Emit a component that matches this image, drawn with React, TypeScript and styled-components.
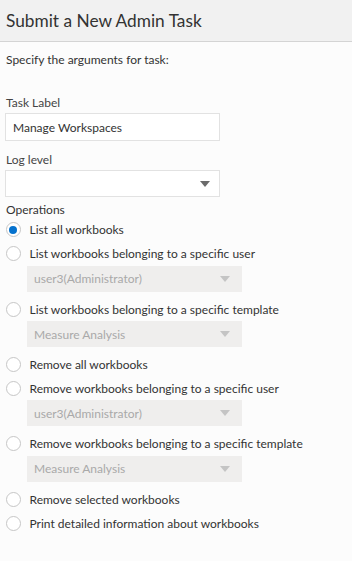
import React from "react";
import styled, { createGlobalStyle } from "styled-components";

const Global = createGlobalStyle`
  html, body { margin: 0; padding: 0; background: #fcfcfc; }
  body { font-family: Lato, "Open Sans", sans-serif; color: #333; font-size: 12px; }
`;

const Header = styled.header`
  height: 41px;
  background: #f1f1f1;
  border-bottom: 1px solid #d4d4d4;
  display: flex;
  align-items: center;
  padding-left: 6px;
  font-size: 17.3px;
  color: #333;
`;

const Body = styled.main`
  display: flex;
  flex-direction: column;
  padding: 10px 6px 0 6px;
`;

const Intro = styled.div`
  line-height: 16px;
  margin-bottom: 27px;
`;

const Label = styled.label<{ $top?: number }>`
  display: block;
  line-height: 16px;
  margin-top: ${(p) => p.$top ?? 0}px;
  margin-bottom: 2px;
  color: #444;
`;

const TextInput = styled.div`
  box-sizing: border-box;
  width: 215px;
  height: 28px;
  margin-left: -1px;
  border: 1px solid #e2e2e2;
  background: #fff;
  display: flex;
  align-items: center;
  padding-left: 7px;
  color: #333;
`;

const Select = styled.div<{ $disabled?: boolean; $indent?: number }>`
  box-sizing: border-box;
  width: 215px;
  height: ${(p) => (p.$disabled ? 26 : 27)}px;
  flex-shrink: 0;
  margin-left: ${(p) => p.$indent ?? -1}px;
  border: 1px solid ${(p) => (p.$disabled ? "#efeeed" : "#e2e2e2")};
  background: ${(p) => (p.$disabled ? "#efeeed" : "#fff")};
  display: flex;
  align-items: center;
  justify-content: space-between;
  padding: 0 8px 0 6px;
  color: ${(p) => (p.$disabled ? "#a9a9a9" : "#333")};
`;

const Caret = styled.span<{ $disabled?: boolean }>`
  width: 0;
  height: 0;
  border-left: 5px solid transparent;
  border-right: 5px solid transparent;
  border-top: 6px solid ${(p) => (p.$disabled ? "#c4c4c4" : "#6b6b6b")};
  margin-right: ${(p) => (p.$disabled ? 3 : 1)}px;
`;

const OpsLabel = styled.div`
  line-height: 16px;
  margin-top: 5px;
  color: #333;
`;

const Group = styled.div`
  display: flex;
  flex-direction: column;
`;

const Row = styled.div<{ $gapTop?: boolean }>`
  display: flex;
  align-items: center;
  height: 23.75px;
  flex-shrink: 0;
  margin-top: ${(p) => (p.$gapTop ? 5.75 : 0)}px;
  color: #333;
`;

const Radio = styled.span<{ $checked?: boolean }>`
  box-sizing: border-box;
  width: 15px;
  height: 15px;
  border-radius: 50%;
  border: 1px solid #c6c6c6;
  background: #fff;
  margin-right: 9px;
  margin-left: -0.5px;
  display: flex;
  align-items: center;
  justify-content: center;
  &::after {
    content: "";
    display: ${(p) => (p.$checked ? "block" : "none")};
    width: 8px;
    height: 8px;
    border-radius: 50%;
    background: #0572ce;
  }
`;

type Op = { label: string; sub?: string; checked?: boolean };

const ops: Op[] = [
  { label: "List all workbooks", checked: true },
  { label: "List workbooks belonging to a specific user", sub: "user3(Administrator)" },
  { label: "List workbooks belonging to a specific template", sub: "Measure Analysis" },
  { label: "Remove all workbooks" },
  { label: "Remove workbooks belonging to a specific user", sub: "user3(Administrator)" },
  { label: "Remove workbooks belonging to a specific template", sub: "Measure Analysis" },
  { label: "Remove selected workbooks" },
  { label: "Print detailed information about workbooks" },
];

export default function App() {
  return (
    <>
      <Global />
      <Header>Submit a New Admin Task</Header>
      <Body>
        <Intro>Specify the arguments for task:</Intro>
        <Label>Task Label</Label>
        <TextInput>Manage Workspaces</TextInput>
        <Label $top={11}>Log level</Label>
        <Select>
          <span />
          <Caret />
        </Select>
        <OpsLabel>Operations</OpsLabel>
        <Group>
          {ops.map((o, i) => (
            <React.Fragment key={o.label}>
              <Row $gapTop={i > 0 && !!ops[i - 1].sub}>
                <Radio $checked={o.checked} />
                {o.label}
              </Row>
              {o.sub && (
                <Select $disabled $indent={21}>
                  <span>{o.sub}</span>
                  <Caret $disabled />
                </Select>
              )}
            </React.Fragment>
          ))}
        </Group>
      </Body>
    </>
  );
}
